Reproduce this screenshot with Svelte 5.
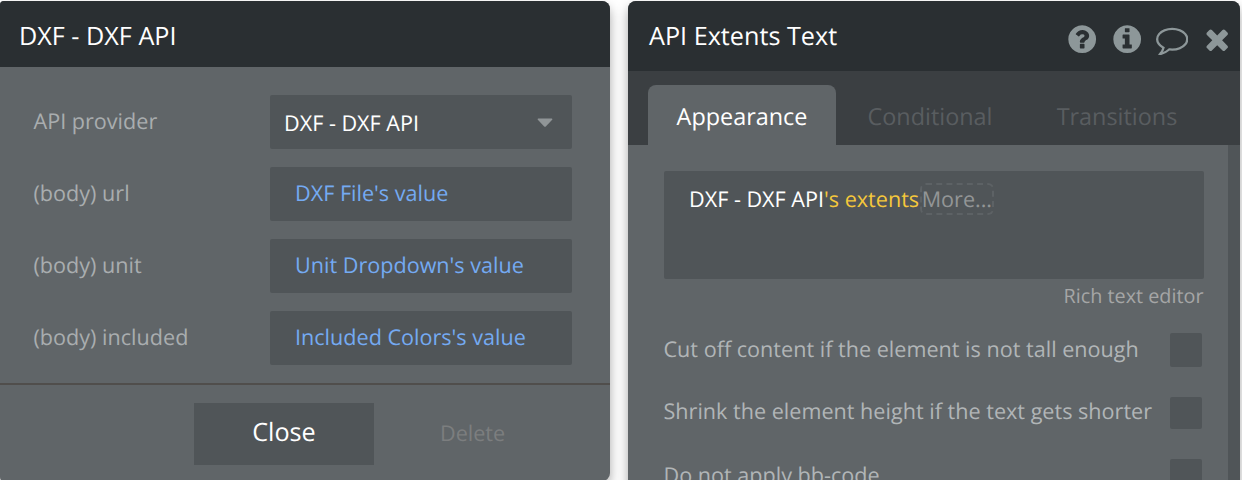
<script>
  const fields = [
    { label: '(body) url', value: "DXF File's value" },
    { label: '(body) unit', value: "Unit Dropdown's value" },
    { label: '(body) included', value: "Included Colors's value" }
  ];
  const options = [
    'Cut off content if the element is not tall enough',
    'Shrink the element height if the text gets shorter',
    'Do not apply bb-code'
  ];
  const disc = 'q0 209-103 385.5t-279.5 279.5-385.5 103-385.5-103-279.5-279.5-103-385.5 103-385.5 279.5-279.5 385.5-103 385.5 103 279.5 279.5 103 385.5z';
  const icons = [
    'M1024 1376v-192q0-14-9-23t-23-9h-192q-14 0-23 9t-9 23v192q0 14 9 23t23 9h192q14 0 23-9t9-23zm256-672q0-88-55.5-163t-138.5-116-170-41q-243 0-371 213-15 24 8 42l132 100q7 6 19 6 16 0 25-12 53-68 86-92 34-24 86-24 48 0 85.5 26t37.5 59q0 38-20 61t-68 45q-63 28-115.5 86.5t-52.5 125.5v36q0 14 9 23t23 9h192q14 0 23-9t9-23q0-19 21.5-49.5t54.5-49.5q32-18 49-28.5t46-35 44.5-48 28-60.5 12.5-81zm384 192' + disc,
    'M1152 1376v-160q0-14-9-23t-23-9h-96v-512q0-14-9-23t-23-9h-320q-14 0-23 9t-9 23v160q0 14 9 23t23 9h96v320h-96q-14 0-23 9t-9 23v160q0 14 9 23t23 9h448q14 0 23-9t9-23zm-128-896v-160q0-14-9-23t-23-9h-192q-14 0-23 9t-9 23v160q0 14 9 23t23 9h192q14 0 23-9t9-23zm640 416' + disc,
    'M896 384q-204 0-381.5 69.5t-282 187.5-104.5 255q0 112 71.5 213.5t201.5 175.5l87 50-27 96q-24 91-70 172 152-63 275-171l43-38 57 6q69 8 130 8 204 0 381.5-69.5t282-187.5 104.5-255-104.5-255-282-187.5-381.5-69.5zm896 512q0 174-120 321.5t-326 233-450 85.5q-70 0-145-8-198 175-460 242-49 14-114 22h-5q-15 0-27-10.5t-16-27.5v-1q-3-4-.5-12t2-10 4.5-9.5l6-9 7-8.5 8-9q7-8 31-34.5t34.5-38 31-39.5 32.5-51 27-59 26-76q-157-89-247.5-220t-90.5-281q0-174 120-321.5t326-233 450-85.5 450 85.5 326 233 120 321.5z',
    'M1490 1322q0 40-28 68l-136 136q-28 28-68 28t-68-28l-294-294-294 294q-28 28-68 28t-68-28l-136-136q-28-28-28-68t28-68l294-294-294-294q-28-28-28-68t28-68l136-136q28-28 68-28t68 28l294 294 294-294q28-28 68-28t68 28l136 136q28 28 28 68t-28 68l-294 294 294 294q28 28 28 68z'
  ];
</script>

<main>
  <section class="panel provider">
    <header>DXF - DXF API</header>
    <div class="fields">
      <div class="row">
        <span class="label">API provider</span>
        <div class="box select">
          <span>DXF - DXF API</span>
          <svg width="16" height="10" viewBox="0 0 16 10"><path d="M1.2.5h13.6q1 .3.4 1.2L8.8 8.4q-.8.8-1.6 0L.8 1.7Q.2.8 1.2.5z" /></svg>
        </div>
      </div>
      {#each fields as f}
        <div class="row">
          <span class="label">{f.label}</span>
          <div class="box value">{f.value}</div>
        </div>
      {/each}
    </div>
    <footer>
      <button class="close">Close</button>
      <button class="delete">Delete</button>
    </footer>
  </section>

  <section class="panel editor">
    <header>
      <span>API Extents Text</span>
      <div class="icons">
        {#each icons as d}
          <svg viewBox="0 0 1792 1792"><path {d} /></svg>
        {/each}
      </div>
    </header>
    <nav>
      <div class="tab active">Appearance</div>
      <div class="tab">Conditional</div>
      <div class="tab last">Transitions</div>
    </nav>
    <div class="body">
      <div class="content">
        <div class="expression"><span>DXF - DXF API</span><span class="prop">'s extents</span><span class="more">More...</span></div>
        <div class="rich">Rich text editor</div>
        {#each options as o}
          <div class="option"><span>{o}</span><i></i></div>
        {/each}
      </div>
      <div class="scroll"></div>
    </div>
  </section>
</main>

<style>
  :global(body) { margin: 0; background: #fff; overflow: hidden; }
  main {
    display: flex;
    gap: 18px;
    width: 1242px;
    height: 480px;
    padding-top: 1px;
    box-sizing: border-box;
    overflow: hidden;
    font-family: 'Open Sans', sans-serif;
    font-size: 21.6px;
    white-space: nowrap;
    text-rendering: geometricPrecision;
  }
  .panel {
    flex: none;
    background: #606568;
    overflow: hidden;
    box-shadow: 0 6px 12px rgba(0, 0, 0, 0.35);
  }
  .provider { width: 610px; height: 480px; border-radius: 4px 8px 8px 4px; }
  .editor { width: 612px; height: 520px; border-radius: 8px; }
  header {
    display: flex;
    justify-content: space-between;
    background: #2a2f32;
    color: #fff;
    font-size: 25.2px;
    line-height: 70px;
    box-sizing: border-box;
  }
  .provider header { height: 66px; padding-left: 19px; }
  .editor header { height: 70px; padding: 0 6.8px 0 21px; }
  .icons { display: flex; gap: 12.6px; padding-top: 22px; }
  .icons svg { width: 32.4px; height: 32.4px; fill: #8d9799; }

  .fields {
    display: flex;
    flex-direction: column;
    gap: 18px;
    height: 288px;
    padding: 28px 38px 0 33.5px;
    border-bottom: 2px solid #504e4c;
  }
  .row { display: flex; justify-content: space-between; height: 54px; line-height: 53px; }
  .label { color: #a9adaf; }
  .box {
    width: 302px;
    box-sizing: border-box;
    border-radius: 2px;
    background: #505558;
  }
  .select {
    display: flex;
    justify-content: space-between;
    align-items: center;
    padding: 3px 19.5px 0 14px;
    color: #fff;
  }
  .select svg { fill: #909597; margin-bottom: 2px; }
  .value { padding-left: 25px; color: #74aaf2; }
  footer { display: flex; padding: 18px 0 0 194px; }
  button {
    border: 0;
    padding: 0;
    font-family: inherit;
    line-height: 58px;
    height: 62px;
    text-rendering: inherit;
  }
  .close { width: 180px; padding-bottom: 4px; background: #505558; color: #fff; font-size: 25.2px; }
  .delete { margin-left: 66px; padding-bottom: 1px; background: none; color: #7c7e7f; font-size: 21.6px; }

  nav {
    display: flex;
    height: 74px;
    padding: 14px 0 0 20px;
    box-sizing: border-box;
    background: #3b3f42;
    font-size: 23.4px;
    line-height: 63px;
    color: #595d60;
  }
  .tab { width: 188px; text-align: center; }
  .tab.last { width: 186px; }
  .active { background: #606568; color: #fff; border-radius: 8px 8px 0 0; }
  .body { display: flex; height: 376px; }
  .content { width: 600px; padding: 26px 24px 0 36px; box-sizing: border-box; }
  .scroll { width: 12px; background: #505558; }
  .expression {
    display: flex;
    align-items: flex-start;
    height: 108px;
    padding: 12px 0 0 25px;
    box-sizing: border-box;
    border-radius: 2px;
    background: #505558;
    color: #fff;
    line-height: 34px;
  }
  .prop { color: #f5c83b; }
  .more {
    height: 32px;
    margin-left: 0.5px;
    box-sizing: border-box;
    border: 2px dashed #5d6265;
    border-radius: 6px;
    color: #939596;
    line-height: 30px;
  }
  .rich { height: 54px; padding-right: 0.5px; color: #a5a6a6; font-size: 19.8px; line-height: 34px; text-align: right; }
  .option {
    display: flex;
    justify-content: space-between;
    height: 62px;
    margin-left: -0.5px;
    padding-right: 2px;
    color: #b1b5b7;
    line-height: 34px;
  }
  .option i { width: 32px; height: 32px; border-radius: 2px; background: #505558; }
  .option:nth-child(3) { height: 64px; }
  .option:nth-child(3) i { height: 34px; }
  .option:nth-child(4) { line-height: 30px; }
</style>
